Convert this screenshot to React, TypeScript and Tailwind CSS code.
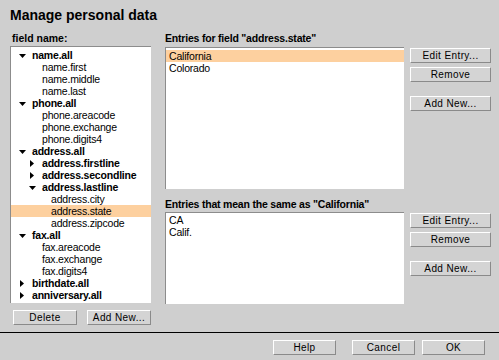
import React from "react";

type Node = { label: string; depth: number; kind: "open" | "closed" | "leaf"; selected?: boolean };

const tree: Node[] = [
  { label: "name.all", depth: 0, kind: "open" },
  { label: "name.first", depth: 1, kind: "leaf" },
  { label: "name.middle", depth: 1, kind: "leaf" },
  { label: "name.last", depth: 1, kind: "leaf" },
  { label: "phone.all", depth: 0, kind: "open" },
  { label: "phone.areacode", depth: 1, kind: "leaf" },
  { label: "phone.exchange", depth: 1, kind: "leaf" },
  { label: "phone.digits4", depth: 1, kind: "leaf" },
  { label: "address.all", depth: 0, kind: "open" },
  { label: "address.firstline", depth: 1, kind: "closed" },
  { label: "address.secondline", depth: 1, kind: "closed" },
  { label: "address.lastline", depth: 1, kind: "open" },
  { label: "address.city", depth: 2, kind: "leaf" },
  { label: "address.state", depth: 2, kind: "leaf", selected: true },
  { label: "address.zipcode", depth: 2, kind: "leaf" },
  { label: "fax.all", depth: 0, kind: "open" },
  { label: "fax.areacode", depth: 1, kind: "leaf" },
  { label: "fax.exchange", depth: 1, kind: "leaf" },
  { label: "fax.digits4", depth: 1, kind: "leaf" },
  { label: "birthdate.all", depth: 0, kind: "closed" },
  { label: "anniversary.all", depth: 0, kind: "closed" },
];

const indent = ["pl-[8px]", "pl-[18px]", "pl-[27px]"];

const Btn = ({ children, className = "" }: { children: React.ReactNode; className?: string }) => (
  <div
    className={`h-[15px] flex items-center justify-center bg-[#d4d4d4] border border-t-white border-l-white border-b-[#8a8a8a] border-r-[#8a8a8a] text-[10px] leading-none tracking-[0.4px] text-black ${className}`}
  >
    {children}
  </div>
);

const Twisty = ({ open }: { open: boolean }) =>
  open ? (
    <svg width="7" height="7" viewBox="0 0 7 7" className="shrink-0">
      <polygon points="0,2 7,2 3.5,6" fill="#000" />
    </svg>
  ) : (
    <svg width="7" height="7" viewBox="0 0 7 7" className="shrink-0">
      <polygon points="1,0 5,3.5 1,7" fill="#000" />
    </svg>
  );

const SideButtons = () => (
  <div className="w-[81px] ml-[6px] flex flex-col pt-[1px]">
    <Btn>Edit Entry...</Btn>
    <Btn className="mt-[4px]">Remove</Btn>
    <Btn className="mt-[14px]">Add New...</Btn>
  </div>
);

export default function App() {
  return (
    <div
      className="w-[499px] h-[360px] bg-[#cfcfcf] text-black flex flex-col overflow-hidden"
      style={{ fontFamily: '"Liberation Sans", Arial, sans-serif' }}
    >
      {/* Title */}
      <div className="px-[10px] pt-[5px] h-[32px] text-[14px] leading-[20px] font-bold">Manage personal data</div>

      <div className="flex px-[10px]">
        {/* Field tree */}
        <div className="w-[142px] flex flex-col">
          <div className="h-[14px] text-[10.5px] leading-[13px] font-bold pl-[2px]">field name:</div>
          <div className="h-[257px] bg-white border-t border-l border-[#8c8c8c] pt-[2px] overflow-hidden">
            {tree.map((n) => (
              <div
                key={n.label}
                className={`h-[12px] flex items-center text-[10.5px] tracking-[-0.2px] leading-none ${indent[n.depth]} ${
                  n.selected ? "bg-[#fdd09f]" : ""
                } ${n.kind === "leaf" ? "" : "font-bold"}`}
              >
                {n.kind === "leaf" ? (
                  <span className="w-[7px] shrink-0" />
                ) : (
                  <Twisty open={n.kind === "open"} />
                )}
                <span className="ml-[6px]">{n.label}</span>
              </div>
            ))}
          </div>
          <div className="flex gap-[10px] mt-[7px] pl-[3px]">
            <Btn className="w-[64px] h-[14px]">Delete</Btn>
            <Btn className="w-[64px] h-[14px]">Add New...</Btn>
          </div>
        </div>

        {/* Entries */}
        <div className="ml-[14px] flex flex-col">
          <div className="h-[15px] text-[10.5px] tracking-[-0.2px] leading-[13px] font-bold">
            Entries for field "address.state"
          </div>
          <div className="flex">
            <div className="w-[239px] h-[142px] bg-white border-t border-l border-[#8c8c8c] pt-[2px] text-[10.5px] tracking-[-0.2px] leading-[12px]">
              <div className="h-[12px] bg-[#fdd09f] pl-[3px]">California</div>
              <div className="h-[12px] pl-[3px]">Colorado</div>
            </div>
            <SideButtons />
          </div>

          <div className="h-[14px] mt-[9px] text-[10.5px] tracking-[-0.2px] leading-[13px] font-bold">
            Entries that mean the same as "California"
          </div>
          <div className="flex">
            <div className="w-[239px] h-[92px] bg-white border-t border-l border-[#8c8c8c] pt-[1px] text-[10.5px] tracking-[-0.2px] leading-[12px]">
              <div className="h-[12px] pl-[3px]">CA</div>
              <div className="h-[12px] pl-[3px]">Calif.</div>
            </div>
            <SideButtons />
          </div>
        </div>
      </div>

      {/* Footer */}
      <div className="mt-auto h-[28px] border-t border-black flex justify-end items-start pt-[7px] pr-[14px]">
        <Btn className="w-[63px]">Help</Btn>
        <Btn className="w-[63px] ml-[16px]">Cancel</Btn>
        <Btn className="w-[63px] ml-[7px]">OK</Btn>
      </div>
    </div>
  );
}
